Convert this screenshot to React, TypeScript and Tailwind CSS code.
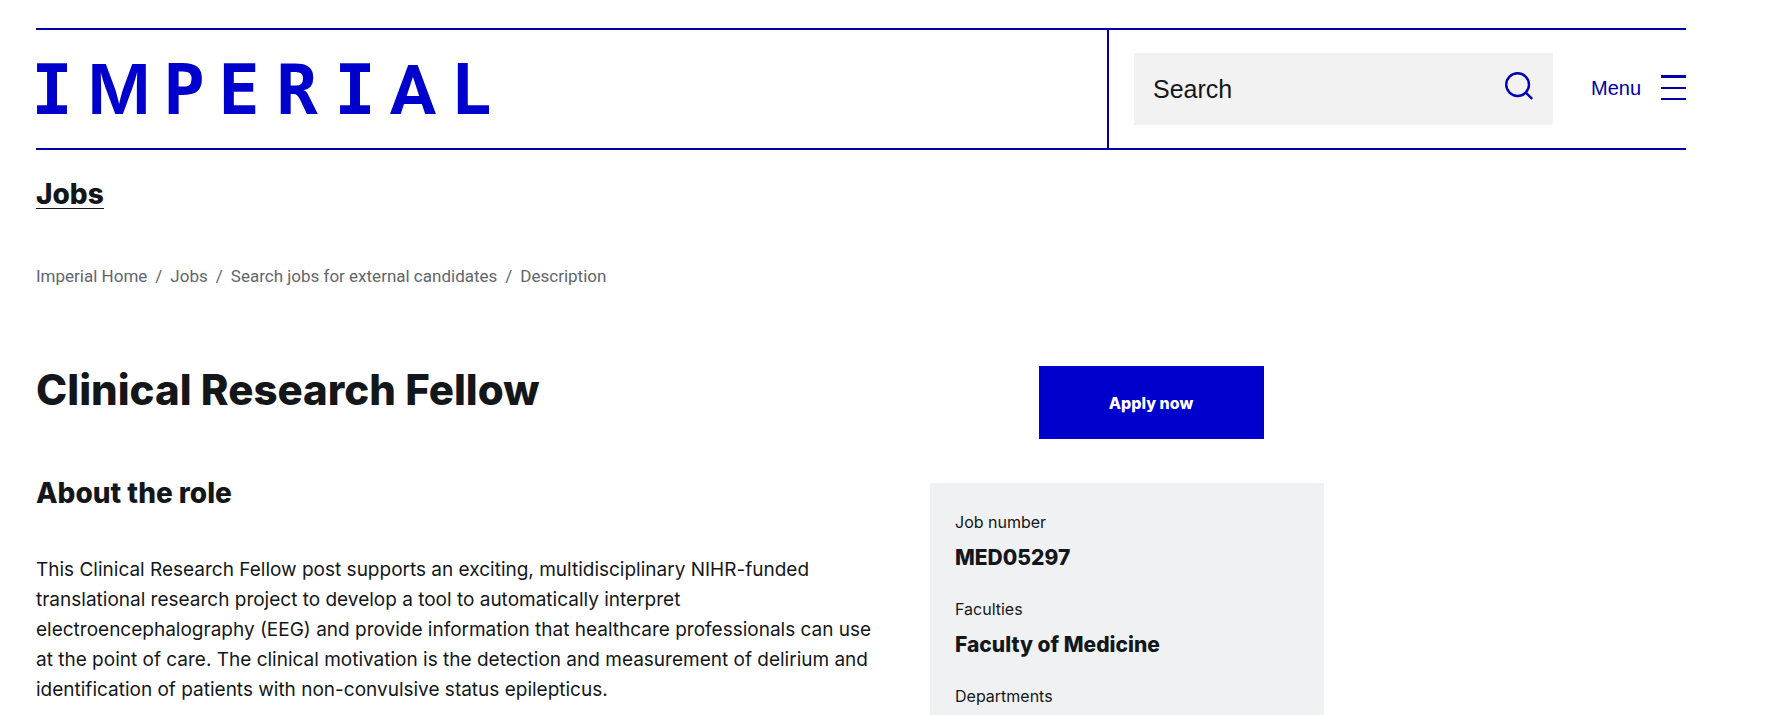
import React from 'react'

interface Crumb {
  label: string
  href?: string
}

interface JobFact {
  label: string
  value: string
}

const CRUMBS: Crumb[] = [
  { label: 'Imperial Home', href: '#home' },
  { label: 'Jobs', href: '#jobs' },
  { label: 'Search jobs for external candidates', href: '#search-jobs' },
  { label: 'Description' },
]

const JOB_FACTS: JobFact[] = [
  { label: 'Job number', value: 'MED05297' },
  { label: 'Faculties', value: 'Faculty of Medicine' },
  { label: 'Departments', value: '' },
]

// Wordmark: one x per letter, each letter centred on it
const Logo: React.FC = () => (
  <svg
    width="456"
    height="50"
    viewBox="0 0 456 50"
    fill="#0000cd"
    fontFamily="'DejaVu Sans Mono', monospace"
    fontWeight="700"
    fontSize="69"
    textAnchor="middle"
    overflow="visible"
    role="img"
    aria-label="Imperial"
  >
    <text x="16 83 148 203 261 319 377 435" y="50">
      I<tspan fontFamily="Inter, sans-serif" fontWeight="600">M</tspan>PERI
      <tspan fontFamily="Roboto, sans-serif">A</tspan>L
    </text>
  </svg>
)

const SearchIcon: React.FC = () => (
  <svg width="28" height="28" viewBox="0 0 28 28" fill="none" stroke="#0000b4" strokeWidth="2.4">
    <circle cx="12.6" cy="12.6" r="11.4" />
    <path d="M20.8 20.6 L27.2 27" />
  </svg>
)

const Header: React.FC = () => (
  <header className="flex border-y-2 border-[#0000a8]">
    <div className="flex flex-1 items-center">
      <a href="#home">
        <Logo />
      </a>
    </div>
    <div className="flex items-center border-l-2 border-[#0000a8] py-[23px] pl-[25px]">
      <form role="search" className="flex h-[72px] w-[419px] items-center bg-[#f2f2f2] pr-5 pl-[19px]">
        <input
          type="text"
          aria-label="Search"
          placeholder="Search"
          className="min-w-0 flex-1 bg-transparent font-['Liberation_Sans',sans-serif] text-[25px] leading-8 text-[#14171a] outline-none placeholder:text-[#14171a]"
        />
        <button type="button" aria-label="Submit search" className="pb-1.5">
          <SearchIcon />
        </button>
      </form>
      <button
        type="button"
        className="ml-[38px] flex items-center gap-5 pb-0.5 font-['Liberation_Sans',sans-serif] text-xl text-[#0000a8]"
      >
        Menu
        <svg width="25" height="26" viewBox="0 0 25 26" fill="#0000a8">
          <rect width="25" height="3" />
          <rect y="12" width="25" height="2" />
          <rect y="23" width="25" height="2" />
        </svg>
      </button>
    </div>
  </header>
)

const Breadcrumbs: React.FC = () => (
  <nav aria-label="Breadcrumb" className="mt-[55px]">
    <ol className="flex flex-wrap font-['Roboto',sans-serif] text-[17px] leading-6 text-[#5f666e]">
      {CRUMBS.map((crumb, i) => (
        <li key={crumb.label}>
          {crumb.href ? <a href={crumb.href}>{crumb.label}</a> : crumb.label}
          {i < CRUMBS.length - 1 && <span className="mx-2">/</span>}
        </li>
      ))}
    </ol>
  </nav>
)

export default function App() {
  return (
    <div className="max-w-[1722px] bg-white px-9 pt-7 font-['Inter',sans-serif] text-[#14171a]">
      <Header />

      <div className="mt-[30px] flex">
        <a href="#jobs" className="border-b border-[#14171a] text-[28px] leading-7 font-extrabold">
          Jobs
        </a>
      </div>

      <Breadcrumbs />

      <main className="mt-[78px] grid max-w-[1288px] grid-cols-[minmax(0,1fr)_394px] gap-x-11">
        <article>
          <h1 className="text-[42px] leading-[48px] font-extrabold">Clinical Research Fellow</h1>
          <h2 className="mt-[63px] text-[28px] leading-8 font-extrabold">About the role</h2>
          <p className="mt-[46px] text-[19px] leading-[30px]">
            This Clinical Research Fellow post supports an exciting, multidisciplinary NIHR-funded
            translational research project to develop a tool to automatically interpret
            electroencephalography (EEG) and provide information that healthcare professionals can use
            at the point of care. The clinical motivation is the detection and measurement of delirium and
            identification of patients with non-convulsive status epilepticus.
          </p>
        </article>

        <aside>
          <div className="flex justify-center pl-12">
            <button
              type="button"
              className="h-[73px] w-[225px] bg-[#0000cd] text-base font-extrabold text-white"
            >
              Apply now
            </button>
          </div>
          <dl className="mt-11 flex flex-col gap-[25px] bg-[#f0f1f3] px-[25px] pt-[27px] pb-7">
            {JOB_FACTS.map((fact) => (
              <div key={fact.label}>
                <dt className="text-base leading-6">{fact.label}</dt>
                {fact.value && (
                  <dd className="mt-2.5 text-[21px] leading-7 font-extrabold">{fact.value}</dd>
                )}
              </div>
            ))}
          </dl>
        </aside>
      </main>
    </div>
  )
}
